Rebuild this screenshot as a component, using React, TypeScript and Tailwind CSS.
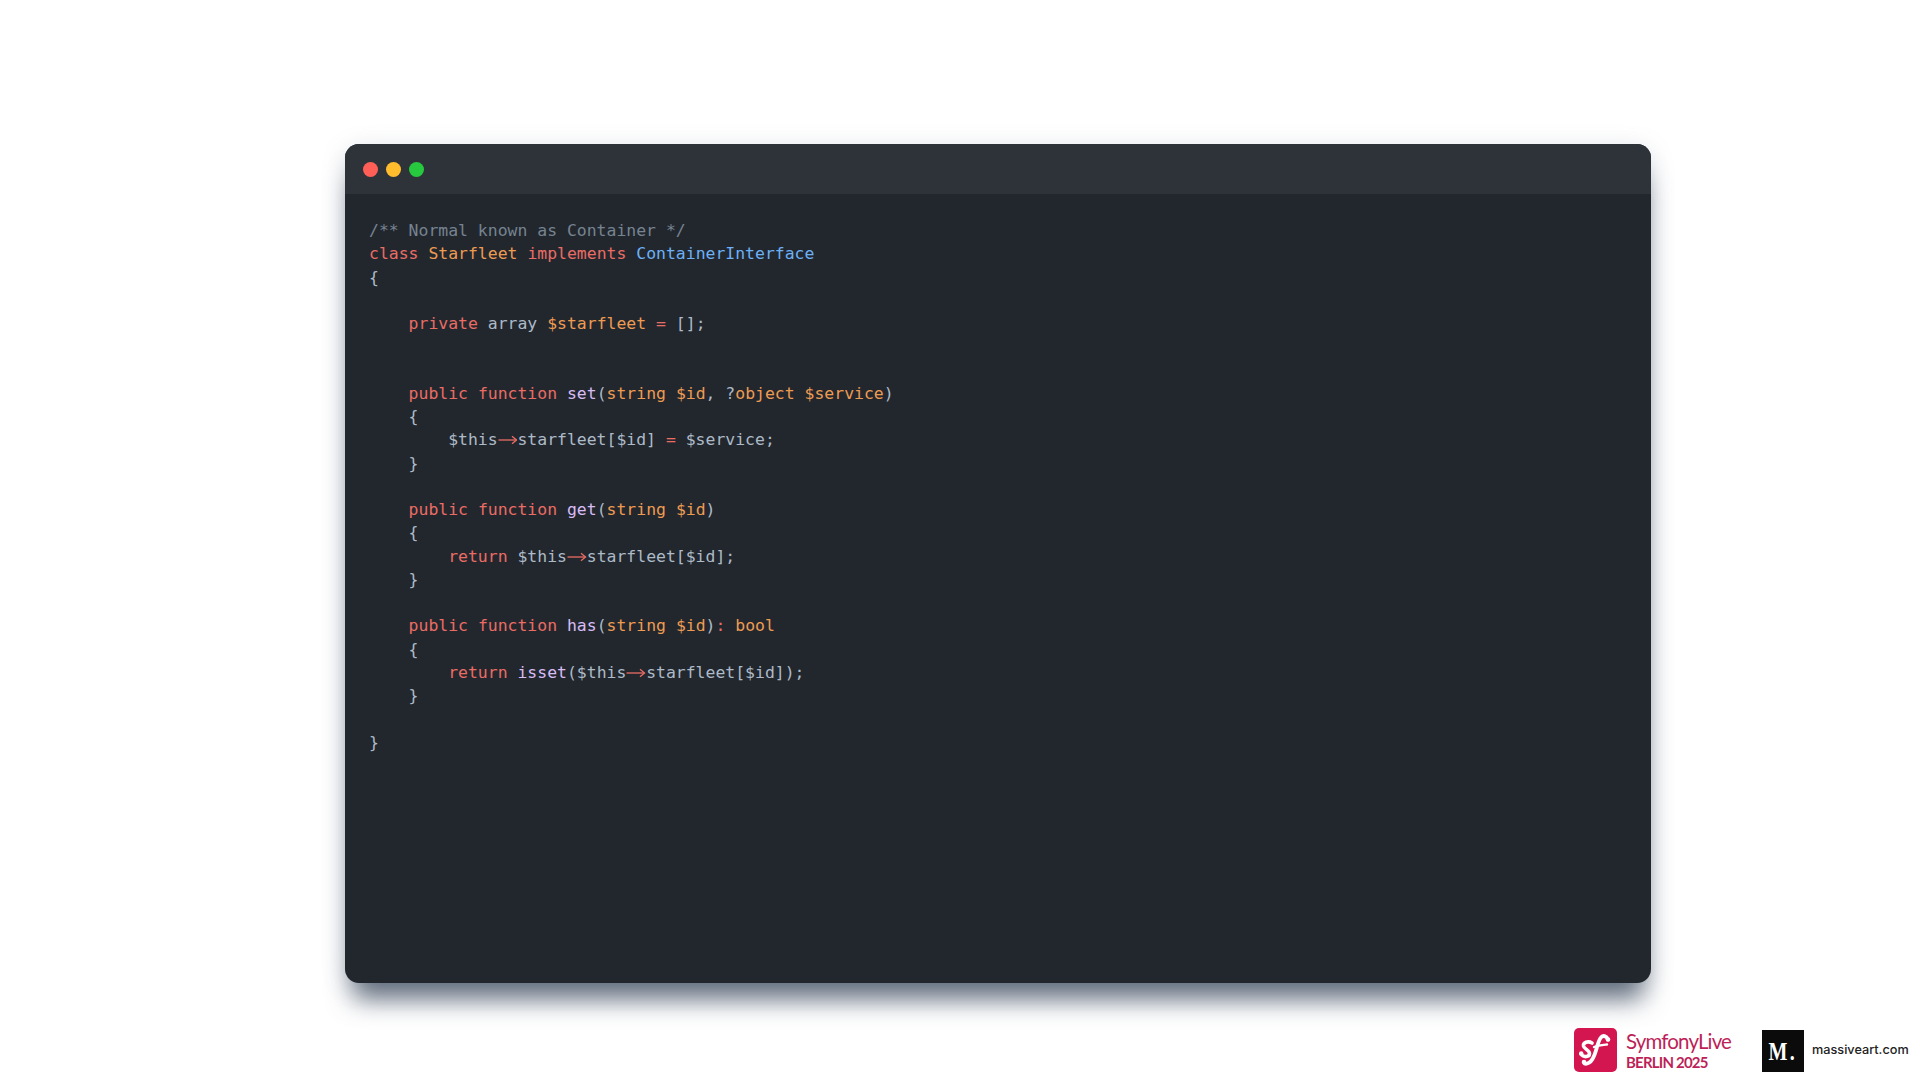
import React from "react";

const K = ({ children }: { children: React.ReactNode }) => <span className="text-[#ea6c64]">{children}</span>;
const O = ({ children }: { children: React.ReactNode }) => <span className="text-[#ee9b52]">{children}</span>;
const P = ({ children }: { children: React.ReactNode }) => <span className="text-[#d8bcf5]">{children}</span>;
const B = ({ children }: { children: React.ReactNode }) => <span className="text-[#6cb0f5]">{children}</span>;

const Arrow = () => (
  <svg viewBox="0 0 19.8 12" className="inline-block w-[19.8px] h-[12px] align-[-1px] text-[#ea6c64]" fill="none" stroke="currentColor" strokeWidth="1.3">
    <path d="M0.5 6H18.5" />
    <path d="M14 2.2L18.5 6L14 9.8" />
  </svg>
);

const L = ({ children }: { children?: React.ReactNode }) => <div className="h-[23.25px] whitespace-pre">{children}</div>;

const SymfonyLogo = () => (
  <svg viewBox="0 0 43 44" className="w-[43px] h-[44px]" fill="none" stroke="#ffffff" strokeLinecap="round" strokeLinejoin="round">
    <rect width="43" height="44" rx="5" fill="#d31650" stroke="none" />
    <path d="M34 11.5C32.5 8 29 6.5 26.5 10C23 15 22.5 25 18.5 31C16.5 34.5 13 36.5 10.5 35.5" strokeWidth="3.8" />
    <path d="M20 19C24 17.5 29 17 33 16.5" strokeWidth="2.4" />
    <path d="M18 15C14 12.5 9 14.5 9.5 18C10 21 15.5 22 15.5 25.5C15.5 29 10 30 7 26" strokeWidth="3.6" />
    <circle cx="34" cy="11.5" r="2.3" fill="#ffffff" stroke="none" />
    <circle cx="10" cy="34" r="2.3" fill="#ffffff" stroke="none" />
    <circle cx="7.2" cy="25.5" r="2.2" fill="#ffffff" stroke="none" />
  </svg>
);

export default function App() {
  return (
    <div className="w-[1920px] h-[1080px] overflow-hidden bg-white flex flex-col pt-[144px] pl-[345px]">
      <div className="w-[1306px] h-[839px] shrink-0 rounded-[14px] bg-[#22272e] overflow-hidden shadow-[0_24px_26px_-8px_rgba(51,65,85,0.75),0_4px_24px_rgba(100,116,139,0.2)] flex flex-col">
        <div className="h-[50px] shrink-0 bg-[#2e333a] flex items-center gap-[8px] pl-[18px]">
          <span className="w-[15px] h-[15px] rounded-full bg-[#ff5f56]" />
          <span className="w-[15px] h-[15px] rounded-full bg-[#ffbd2e]" />
          <span className="w-[15px] h-[15px] rounded-full bg-[#27c93f]" />
        </div>
        <div className="pl-[24px] pt-[25px] font-['DejaVu_Sans_Mono',monospace] text-[16.45px] leading-[23.25px] text-[#adbac7]">
          <L><span className="text-[#768390]">/** Normal known as Container */</span></L>
          <L><K>class</K> <O>Starfleet</O> <K>implements</K> <B>ContainerInterface</B></L>
          <L>{"{"}</L>
          <L />
          <L>{"    "}<K>private</K> array <O>$starfleet</O> <K>=</K> [];</L>
          <L />
          <L />
          <L>{"    "}<K>public</K> <K>function</K> <P>set</P>(<O>string</O> <O>$id</O>, ?<O>object</O> <O>$service</O>)</L>
          <L>{"    {"}</L>
          <L>{"        $this"}<Arrow />starfleet[$id] <K>=</K> $service;</L>
          <L>{"    }"}</L>
          <L />
          <L>{"    "}<K>public</K> <K>function</K> <P>get</P>(<O>string</O> <O>$id</O>)</L>
          <L>{"    {"}</L>
          <L>{"        "}<K>return</K> $this<Arrow />starfleet[$id];</L>
          <L>{"    }"}</L>
          <L />
          <L>{"    "}<K>public</K> <K>function</K> <P>has</P>(<O>string</O> <O>$id</O>)<K>:</K> <O>bool</O></L>
          <L>{"    {"}</L>
          <L>{"        "}<K>return</K> <P>isset</P>($this<Arrow />starfleet[$id]);</L>
          <L>{"    }"}</L>
          <L />
          <L>{"}"}</L>
        </div>
      </div>

      <div className="mt-[45px] flex items-start">
        <div className="ml-[1229px] w-[43px] h-[44px]">
          <SymfonyLogo />
        </div>
        <div className="ml-[9px] w-[126px] flex flex-col">
          <span className="font-['Lato',sans-serif] font-normal text-[20.5px] leading-[24px] tracking-[-0.85px] text-[#bd1f58] mt-[1px] whitespace-nowrap">
            SymfonyLive
          </span>
          <span className="font-['Lato',sans-serif] font-bold text-[15px] leading-[16px] tracking-[-0.8px] text-[#bd1f58] mt-[1px] whitespace-nowrap">
            BERLIN 2025
          </span>
        </div>
        <div className="ml-[10px] mt-[2px] w-[42px] h-[42px] bg-[#0b0b0b] flex items-center justify-center">
          <span className="inline-block scale-x-[0.8] font-['Liberation_Serif',serif] font-bold text-[25px] tracking-[3px] leading-none text-white">M.</span>
        </div>
        <span className="ml-[8px] mt-[14px] font-['Inter',sans-serif] font-medium text-[12.7px] leading-[16px] text-[#222222] whitespace-nowrap">
          massiveart.com
        </span>
      </div>
    </div>
  );
}
